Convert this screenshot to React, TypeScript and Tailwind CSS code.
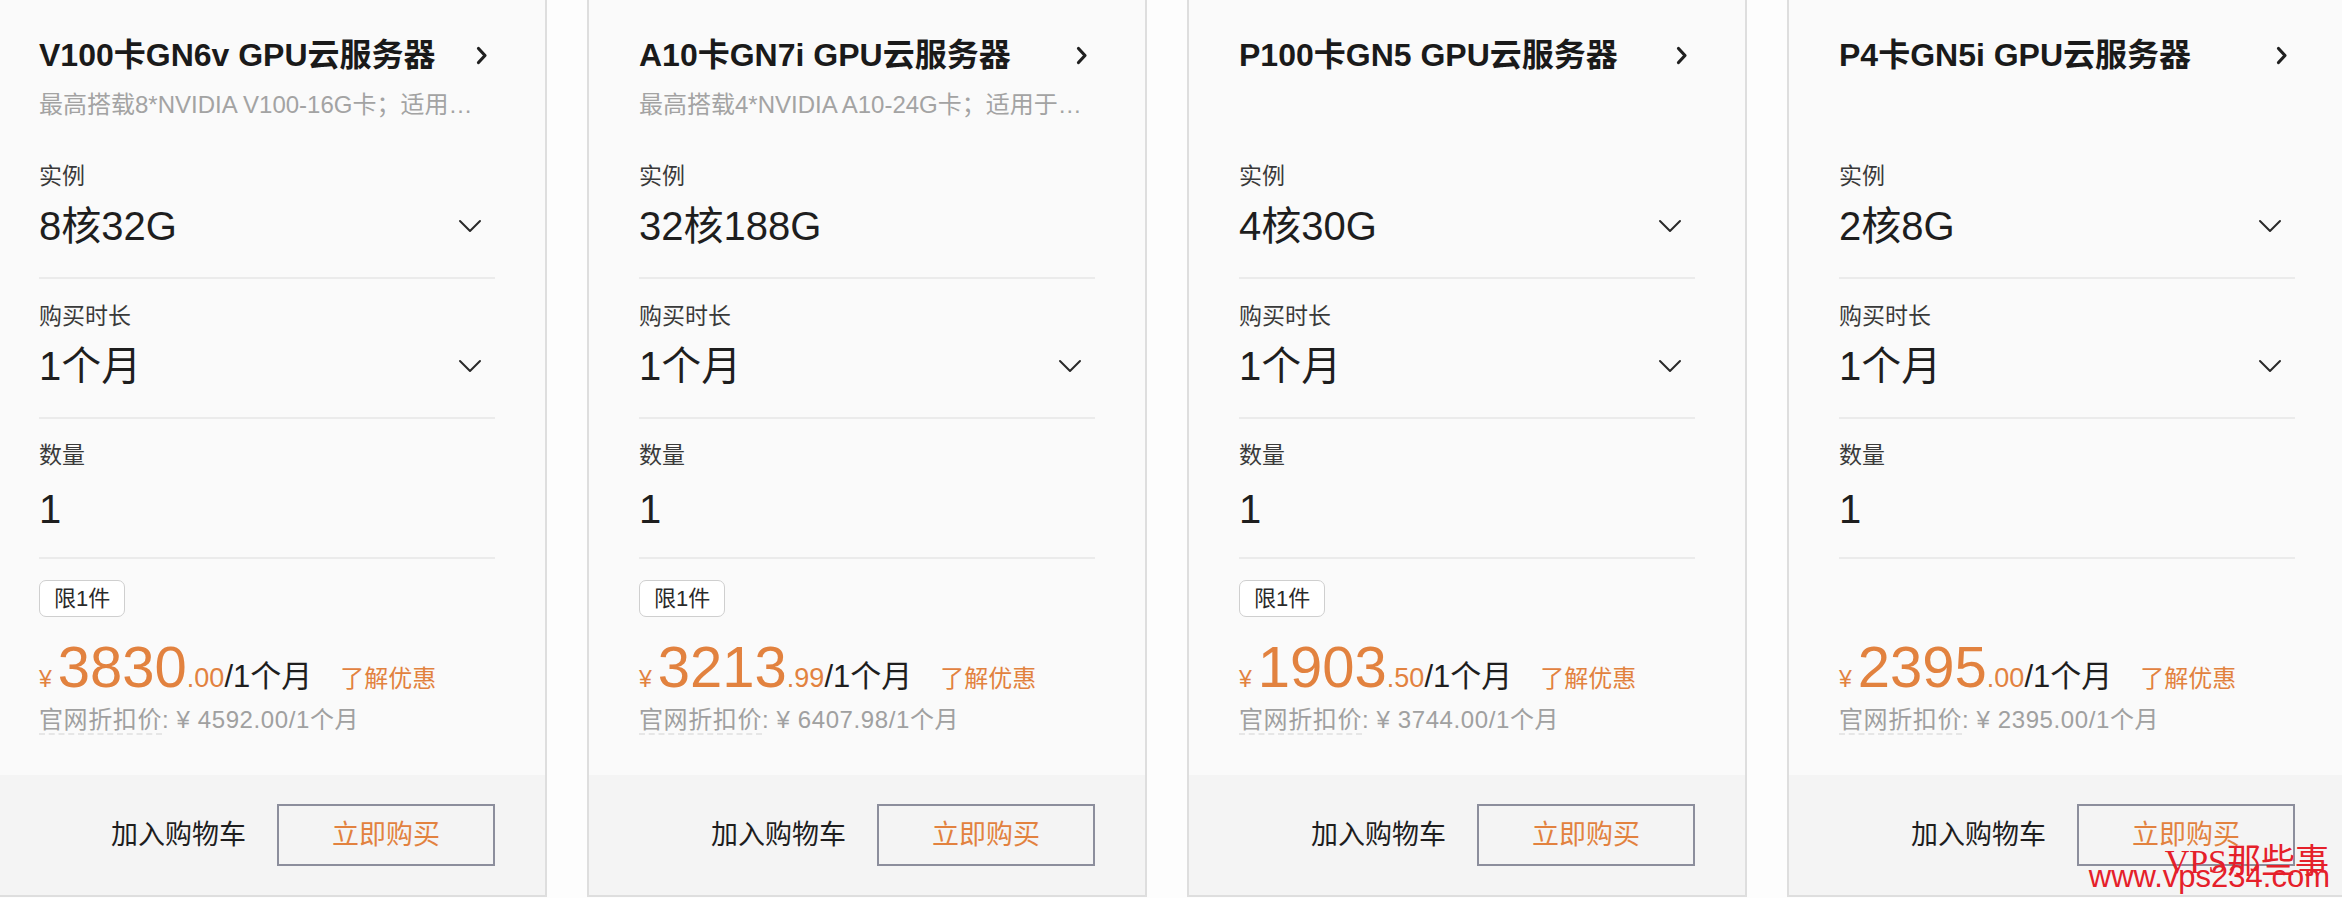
import React from "react";

type Card = {
  title: string;
  desc: string;
  spec: string;
  limited: boolean;
  price: string;
  cents: string;
  original: string;
};

const CARDS: Card[] = [
  {
    title: "V100卡GN6v GPU云服务器",
    desc: "最高搭载8*NVIDIA V100-16G卡；适用于深度学习训练与科学计算",
    spec: "8核32G",
    limited: true,
    price: "3830",
    cents: ".00",
    original: "4592.00",
  },
  {
    title: "A10卡GN7i GPU云服务器",
    desc: "最高搭载4*NVIDIA A10-24G卡；适用于AI推理及图形渲染",
    spec: "32核188G",
    limited: true,
    price: "3213",
    cents: ".99",
    original: "6407.98",
  },
  {
    title: "P100卡GN5 GPU云服务器",
    desc: "",
    spec: "4核30G",
    limited: true,
    price: "1903",
    cents: ".50",
    original: "3744.00",
  },
  {
    title: "P4卡GN5i GPU云服务器",
    desc: "",
    spec: "2核8G",
    limited: false,
    price: "2395",
    cents: ".00",
    original: "2395.00",
  },
];

function ChevronRight() {
  return (
    <svg width="12" height="19" viewBox="0 0 12 19" fill="none" className="mr-[7px] shrink-0">
      <polyline
        points="2.5 2.5 9 9.5 2.5 16.5"
        stroke="#1f1f1f"
        strokeWidth="3.2"
        strokeLinecap="round"
        strokeLinejoin="round"
      />
    </svg>
  );
}

function ChevronDown() {
  return (
    <svg width="24" height="16" viewBox="0 0 24 16" fill="none" className="mr-[13px]">
      <polyline
        points="2 3 12 13 22 3"
        stroke="#2a2a2a"
        strokeWidth="2"
        strokeLinecap="round"
        strokeLinejoin="round"
      />
    </svg>
  );
}

function Field({
  label,
  value,
  select,
  last,
}: {
  label: string;
  value: string;
  select?: boolean;
  last?: boolean;
}) {
  return (
    <div className={last ? "pt-[21px]" : "pt-[22px]"}>
      <div className="text-[23px] leading-[30px] text-[#3a3a3a]">{label}</div>
      <div className={`${last ? "mt-[14px]" : "mt-[10px]"} h-[50px] flex items-center justify-between`}>
        <span className="text-[40px] leading-[50px] text-[#1e1e1e]">{value}</span>
        {select && <ChevronDown />}
      </div>
      <div className={`${last ? "mt-[23px]" : "mt-[26px]"} h-[2px] bg-[#ebebeb]`} />
    </div>
  );
}

function ProductCard({ card }: { card: Card }) {
  return (
    <div className="w-[560px] shrink-0 border-2 border-[#dedede] bg-[#fafafa] flex flex-col">
      <div className="px-[50px]">
        {/* header */}
        <div className="h-[139px] pt-[35px]">
          <div className="h-[40px] flex items-center justify-between">
            <span className="text-[32px] leading-[40px] font-semibold text-[#1a1a1a] whitespace-nowrap">
              {card.title}
            </span>
            <ChevronRight />
          </div>
          <div className="mt-[15px] h-[30px] text-[24px] leading-[30px] text-[#a3a3a3] truncate pr-[6px]">
            {card.desc}
          </div>
        </div>

        <Field label="实例" value={card.spec} select={card.spec !== "32核188G"} />
        <Field label="购买时长" value="1个月" select />
        <Field label="数量" value="1" last />

        {/* price */}
        <div className="h-[216px] pt-[21px]">
          <div className="h-[37px]">
            {card.limited && (
              <span className="inline-flex h-[37px] items-center rounded-[7px] border-[1.5px] border-[#cfcfcf] bg-white px-[14px] text-[22px] text-[#2a2a2a]">
                限1件
              </span>
            )}
          </div>
          <div className="mt-[21px] flex items-baseline leading-none whitespace-nowrap">
            <span className="text-[23px] text-[#e2823f] mr-[6px]">¥</span>
            <span className="text-[58px] text-[#e2823f]">{card.price}</span>
            <span className="text-[27px] text-[#e2823f]">{card.cents}</span>
            <span className="text-[31px] text-[#1e1e1e]">/1个月</span>
            <span className="ml-[28px] text-[24px] text-[#e2823f]">了解优惠</span>
          </div>
          <div className="mt-[9px] text-[24px] leading-[30px] tracking-[0.6px] text-[#a0a0a0] whitespace-nowrap">
            <span className="border-b-2 border-dashed border-[#e6e6e6]">官网折扣价</span>: ¥ {card.original}/1个月
          </div>
        </div>
      </div>

      {/* footer */}
      <div className="h-[120px] bg-[#f4f4f4] flex items-center justify-end px-[50px]">
        <span className="mr-[31px] text-[27px] text-[#1e1e1e]">加入购物车</span>
        <button className="w-[218px] h-[62px] border-2 border-[#8c8e9c] bg-transparent text-[27px] text-[#e2823f]">
          立即购买
        </button>
      </div>
    </div>
  );
}

export default function App() {
  return (
    <div className="relative w-[2342px] h-[898px] overflow-hidden bg-[#fdfdfd] font-['Liberation_Sans','Noto_Sans_CJK_SC',sans-serif]">
      <div className="flex gap-[40px] ml-[-13px] mt-[-2px]">
        {CARDS.map((card) => (
          <ProductCard key={card.title} card={card} />
        ))}
      </div>

      {/* watermark */}
      <div className="absolute right-[12px] bottom-[6px] text-right text-[#e5202a] leading-none pointer-events-none">
        <div className="font-['Liberation_Serif','Noto_Sans_CJK_SC',serif] text-[34px] mr-[1px]">VPS那些事</div>
        <div className="-mt-[18px] text-[31px]">www.vps234.com</div>
      </div>
    </div>
  );
}
